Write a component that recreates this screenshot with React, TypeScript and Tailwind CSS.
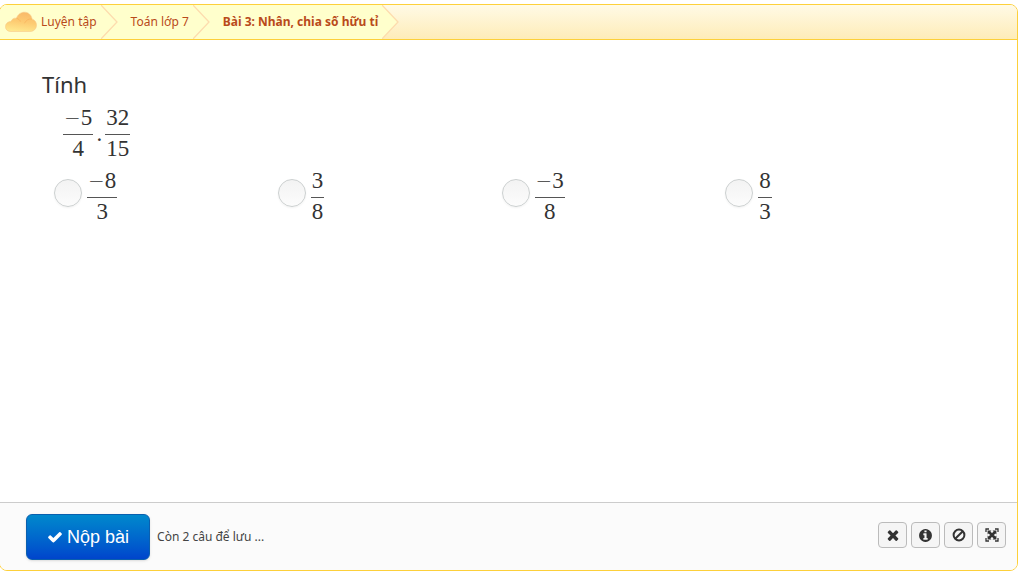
import React, { useState } from 'react';

const breadcrumbs = [
  { label: 'Luyện tập', cloud: true },
  { label: 'Toán lớp 7' },
  { label: 'Bài 3: Nhân, chia số hữu tỉ', active: true },
];

const answers = [
  { id: 'a', num: '8', den: '3', negative: true },
  { id: 'b', num: '3', den: '8' },
  { id: 'c', num: '3', den: '8', negative: true },
  { id: 'd', num: '8', den: '3' },
];

const CHECK_PATH =
  'M1671 566q0 40-28 68l-724 724-136 136q-28 28-68 28t-68-28l-136-136-362-362q-28-28-28-68t28-68l136-136q28-28 68-28t68 28l294 295 656-657q28-28 68-28t68 28l136 136q28 28 28 68z';
const TIMES_PATH =
  'M1490 1322q0 40-28 68l-136 136q-28 28-68 28t-68-28l-294-294-294 294q-28 28-68 28t-68-28l-136-136q-28-28-28-68t28-68l294-294-294-294q-28-28-28-68t28-68l136-136q28-28 68-28t68 28l294 294 294-294q28-28 68-28t68 28l136 136q28 28 28 68t-28 68l-294 294 294 294q28 28 28 68z';
const INFO_PATH =
  'M1152 1376v-160q0-14-9-23t-23-9h-96v-512q0-14-9-23t-23-9h-320q-14 0-23 9t-9 23v160q0 14 9 23t23 9h96v320h-96q-14 0-23 9t-9 23v160q0 14 9 23t23 9h448q14 0 23-9t9-23zm-128-896v-160q0-14-9-23t-23-9h-192q-14 0-23 9t-9 23v160q0 14 9 23t23 9h192q14 0 23-9t9-23zm640 416q0 209-103 385.5t-279.5 279.5-385.5 103-385.5-103-279.5-279.5-103-385.5 103-385.5 279.5-279.5 385.5-103 385.5 103 279.5 279.5 103 385.5z';

const Glyph: React.FC<{ d: string; className?: string }> = ({ d, className }) => (
  <svg viewBox="0 0 1792 1792" fill="currentColor" className={className} aria-hidden="true">
    <path d={d} />
  </svg>
);

const BanIcon = () => (
  <svg viewBox="0 0 16 16" fill="none" stroke="currentColor" strokeWidth="2" className="h-4 w-4" aria-hidden="true">
    <circle cx="8" cy="8" r="5.4" />
    <path d="M4.2 11.8l7.6-7.6" />
  </svg>
);

const FullscreenIcon = () => (
  <svg viewBox="0 0 16 16" fill="none" stroke="currentColor" className="h-4 w-4" aria-hidden="true">
    <path d="M2 5V2h3M11 2h3v3M14 11v3h-3M5 14H2v-3" strokeWidth="1.3" />
    <path d="M5 5l6 6M11 5l-6 6" strokeWidth="2.6" />
    <path d="M3.600 3.600h3.800L3.600 7.400zM12.400 3.600v3.800L8.600 3.600zM12.400 12.400H8.600l3.800-3.800zM3.600 12.400V8.600l3.800 3.800z" fill="currentColor" stroke="none" />
  </svg>
);

const CloudIcon = () => (
  <svg viewBox="0 0 32 22" className="h-[22px] w-8" aria-hidden="true">
    <defs>
      <linearGradient id="cloud" x1="0.6" y1="0" x2="0.4" y2="1">
        <stop offset="0" stopColor="#f9b96a" />
        <stop offset="0.5" stopColor="#fdcb72" />
        <stop offset="1" stopColor="#ffe88e" />
      </linearGradient>
    </defs>
    <path
      d="M6 20.500C2.500 20.500.5 18.500.5 15.700c0-3 2.400-5.200 5.300-5.200 1.400-2.800 3.400-3.800 5.600-3.200C12.800 3.400 16 1.200 19.400 1.200c4.200 0 7.200 3 7.600 6.800 2.800.8 4.500 3.200 4.500 6 0 4-2.800 6.500-6.600 6.500z"
      fill="url(#cloud)"
      stroke="#f8c98a"
      strokeWidth="0.6"
    />
    <path d="M11.400 7.300c2 .4 3.400 1.600 4 3.400M27 8c-3-.4-6 1-7.600 4.400" fill="none" stroke="#f6a653" strokeWidth="0.8" opacity="0.6" />
  </svg>
);

const Fraction: React.FC<{ num: string; den: string; negative?: boolean }> = ({ num, den, negative }) => (
  <span className="inline-flex flex-col text-center font-['Liberation_Serif',serif] text-[23px] leading-7 text-[#333]">
    <span className="flex items-center justify-center border-b border-[#555] px-px pb-0.5">
      {negative && <span className="font-['DejaVu_Sans',sans-serif] text-xl leading-7 font-extralight">−</span>}
      {num}
    </span>
    <span>{den}</span>
  </span>
);

const ToolButton: React.FC<{ label: string; children: React.ReactNode }> = ({ label, children }) => (
  <button
    type="button"
    aria-label={label}
    className="flex h-[26px] w-[29px] items-center justify-center rounded border border-[#bbb] bg-[#f5f5f5] text-[#333]"
  >
    {children}
  </button>
);

const App: React.FC = () => {
  const [selected, setSelected] = useState('');

  return (
    <div className="flex min-h-screen flex-col bg-white pt-1 pr-1.5 pb-3.5 font-['Noto_Sans','Open_Sans',sans-serif] text-[#333]">
      <div className="-ml-px flex flex-1 flex-col overflow-hidden rounded-lg border border-[#fdd03a]">
        <nav className="border-b border-[#fdd03a] bg-gradient-to-b from-[#fffae6] to-[#feecb8]">
          <ol className="flex h-[34px] text-xs text-[#b94a1a]">
            {breadcrumbs.map(({ label, cloud, active }) => (
              <li key={label} className="flex">
                <a
                  href="#"
                  className={`flex items-center bg-[#ffffcc] pr-1 ${cloud ? 'gap-1 pl-[5px]' : 'pl-[13px]'} ${active ? 'font-bold' : ''}`}
                >
                  {cloud && <CloudIcon />}
                  {label}
                </a>
                <svg viewBox="0 0 17 34" className={`h-[34px] w-[17px] ${active ? '' : 'bg-[#ffffcc]'}`} aria-hidden="true">
                  <path d="M0 0l16 17L0 34z" fill="#ffffcc" />
                  <path d="M0 0l16 17L0 34" fill="none" stroke="#fddcae" strokeWidth="1.3" />
                </svg>
              </li>
            ))}
          </ol>
        </nav>

        <main className="flex-1 pt-7 pl-[42px]">
          <h1 className="text-[22px] leading-8">Tính</h1>
          <div className="mt-1 flex items-center pl-[21px]">
            <Fraction num="5" den="4" negative />
            <span className="w-3 text-center font-['Liberation_Serif',serif] text-[23px] leading-7">.</span>
            <Fraction num="32" den="15" />
          </div>
          <div className="mt-1 grid grid-cols-4 pr-[68px] pl-3">
            {answers.map(({ id, ...value }) => (
              <label key={id} className="flex items-center gap-[5px]">
                <input
                  type="radio"
                  name="answer"
                  value={id}
                  checked={selected === id}
                  onChange={() => setSelected(id)}
                  className="mb-2 h-7 w-7 appearance-none rounded-full border border-[#ccd0d0] bg-gradient-to-b from-[#f3f3f3] to-[#fcfcfc] shadow-xs checked:border-8 checked:border-[#0066cc]"
                />
                <Fraction {...value} />
              </label>
            ))}
          </div>
        </main>

        <footer className="flex items-center justify-between border-t border-[#ccc] bg-[#fbfbfb] pt-[11px] pr-[11px] pb-2.5 pl-[26px]">
          <div className="flex items-center gap-[7px]">
            <button
              type="button"
              className="flex h-[46px] items-center gap-1 rounded-md border border-[#0a5fae] bg-gradient-to-b from-[#0088cc] to-[#0044cc] px-5 font-['Liberation_Sans',sans-serif] text-lg text-white shadow-sm"
            >
              <Glyph d={CHECK_PATH} className="h-4 w-4" />
              Nộp bài
            </button>
            <span className="text-xs text-[#444]">Còn 2 câu để lưu ...</span>
          </div>
          <div className="mb-1 flex gap-1">
            <ToolButton label="Đóng">
              <Glyph d={TIMES_PATH} className="h-4 w-4" />
            </ToolButton>
            <ToolButton label="Thông tin">
              <Glyph d={INFO_PATH} className="h-[15px] w-[15px]" />
            </ToolButton>
            <ToolButton label="Báo lỗi">
              <BanIcon />
            </ToolButton>
            <ToolButton label="Toàn màn hình">
              <FullscreenIcon />
            </ToolButton>
          </div>
        </footer>
      </div>
    </div>
  );
};

export default App;
